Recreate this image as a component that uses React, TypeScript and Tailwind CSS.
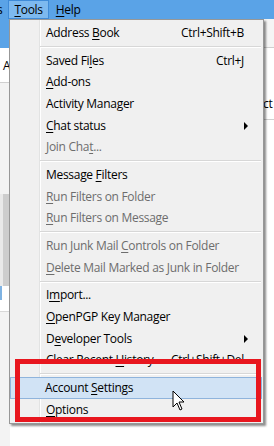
import React from 'react';

type Item =
  | { sep: true }
  | {
      sep?: false;
      pre: string;
      key?: string;
      post?: string;
      shortcut?: string;
      submenu?: boolean;
      disabled?: boolean;
      hover?: boolean;
    };

const items: Item[] = [
  { pre: 'Address ', key: 'B', post: 'ook', shortcut: 'Ctrl+Shift+B' },
  { sep: true },
  { pre: 'Saved Fi', key: 'l', post: 'es', shortcut: 'Ctrl+J' },
  { pre: '', key: 'A', post: 'dd-ons' },
  { pre: 'Activity Manager' },
  { pre: '', key: 'C', post: 'hat status', submenu: true },
  { pre: 'Join Cha', key: 't', post: '...', disabled: true },
  { sep: true },
  { pre: 'Message ', key: 'F', post: 'ilters' },
  { pre: '', key: 'R', post: 'un Filters on Folder', disabled: true },
  { pre: '', key: 'R', post: 'un Filters on Message', disabled: true },
  { sep: true },
  { pre: 'Run Junk Mail ', key: 'C', post: 'ontrols on Folder', disabled: true },
  { pre: '', key: 'D', post: 'elete Mail Marked as Junk in Folder', disabled: true },
  { sep: true },
  { pre: 'I', key: 'm', post: 'port...' },
  { pre: '', key: 'O', post: 'penPGP Key Manager' },
  { pre: 'D', key: 'e', post: 'veloper Tools', submenu: true },
  { pre: 'Clear Recent ', key: 'H', post: 'istory...', shortcut: 'Ctrl+Shift+Del' },
  { sep: true },
  { pre: 'Account ', key: 'S', post: 'ettings', hover: true },
  { pre: '', key: 'O', post: 'ptions' },
];

const MenuRow = ({ item }: { item: Item }) => {
  if (item.sep) {
    return (
      <div className="h-[6px] flex items-center pl-[30px] pr-[2px]">
        <div className="flex-1 border-t border-[#d7d7d7] border-b border-b-white" />
      </div>
    );
  }
  return (
    <div
      className={
        'h-[21.7px] flex items-center pl-[34px] pr-[17px] mx-[1px] ' +
        (item.hover ? 'bg-[#d1e3f5] border border-[#8fb4dc] -ml-[0px]' : 'border border-transparent') +
        (item.disabled ? ' text-[#6d6d6d]' : ' text-black')
      }
    >
      <span className="flex-1 whitespace-nowrap">
        {item.pre}
        {item.key && <span className="underline underline-offset-[2px]">{item.key}</span>}
        {item.post}
      </span>
      {item.shortcut && <span className="whitespace-nowrap">{item.shortcut}</span>}
      {item.submenu && (
        <svg width="5" height="8" viewBox="0 0 5 8" className="mr-[-5px]">
          <path d="M0 0 L4 4 L0 8 Z" fill="#000" />
        </svg>
      )}
    </div>
  );
};

export default function App() {
  return (
    <div className="relative w-[274px] h-[446px] overflow-hidden bg-white text-[12px] font-['Open_Sans',sans-serif] tracking-[-0.3px]">
      {/* background window */}
      <div className="flex flex-col h-full">
        <div className="h-[19px] bg-[#5aa3e7] flex items-stretch text-black">
          <span className="pl-0 pr-[6px] leading-[19px] -ml-[3px]">s</span>
          <span className="px-[5px] leading-[17px] bg-[#7db9ef] border border-[#3f8bd8]">
            <span className="underline underline-offset-[2px]">T</span>ools
          </span>
          <span className="px-[7px] leading-[19px]">
            <span className="underline underline-offset-[2px]">H</span>elp
          </span>
        </div>
        <div className="flex flex-1">
          <div className="w-[10px] flex flex-col">
            <div className="h-[29px] bg-[#5aa3e7]" />
            <div className="h-[35px] bg-white border-b border-[#d0d0d0] pl-[3px] leading-[36px]">A</div>
            <div className="h-[111px] bg-[#f3f3f3]" />
            <div className="h-[92px] bg-[#e9e9e9] pl-[3px] pr-[1px]">
              <div className="h-full bg-[#cdcdcd]" />
            </div>
            <div className="h-[26px] bg-white border-b border-[#d8d8d8] flex">
              <div className="w-[2px] h-[14px] bg-[#7fb3e3]" />
            </div>
            <div className="flex-1 bg-[#f3f3f3]" />
          </div>
          <div className="flex-1" />
          <div className="w-[10px] flex flex-col">
            <div className="h-[29px] bg-[#f5f5f5] border-b border-[#cfcfcf]" />
            <div className="h-[42px] bg-white" />
            <div className="h-[30px] bg-white border-b border-[#d0d0d0] leading-[28px] -ml-[1px]">ct</div>
            <div className="flex-1 bg-white" />
          </div>
        </div>
      </div>

      {/* Tools menu */}
      <div className="absolute left-[9px] top-[19px] w-[255px] bg-[#f0f0f0] border border-[#979797] shadow-[2px_2px_2px_rgba(0,0,0,0.45)] py-[2px]">
        <div className="absolute left-[29px] top-0 bottom-0 w-[2px] border-l border-[#e2e3e3] border-r border-r-white" />
        <div className="relative flex flex-col">
          {items.map((it, i) => (
            <MenuRow key={i} item={it} />
          ))}
        </div>
      </div>

      {/* red annotation box */}
      <div className="absolute left-[15px] top-[359px] w-[246px] h-[63px] border-[5px] border-[#e8161e]" />

      {/* mouse cursor */}
      <svg className="absolute left-[172px] top-[390px]" width="13" height="21" viewBox="0 0 13 21">
        <path
          d="M1 1 L1 17 L5 13 L8 20 L10 19 L7 12 L12 12 Z"
          fill="#fff"
          stroke="#000"
          strokeWidth="1"
          strokeLinejoin="miter"
        />
      </svg>
    </div>
  );
}
